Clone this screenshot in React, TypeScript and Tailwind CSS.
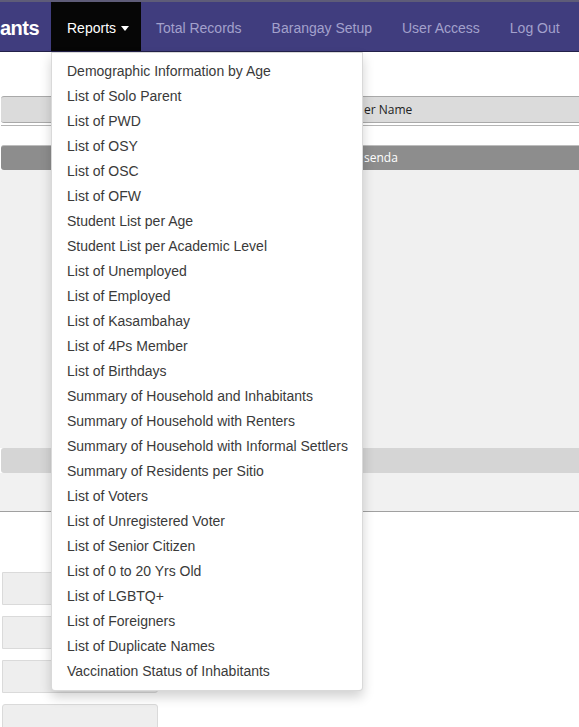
import React from "react";

const reportItems = [
  "Demographic Information by Age",
  "List of Solo Parent",
  "List of PWD",
  "List of OSY",
  "List of OSC",
  "List of OFW",
  "Student List per Age",
  "Student List per Academic Level",
  "List of Unemployed",
  "List of Employed",
  "List of Kasambahay",
  "List of 4Ps Member",
  "List of Birthdays",
  "Summary of Household and Inhabitants",
  "Summary of Household with Renters",
  "Summary of Household with Informal Settlers",
  "Summary of Residents per Sitio",
  "List of Voters",
  "List of Unregistered Voter",
  "List of Senior Citizen",
  "List of 0 to 20 Yrs Old",
  "List of LGBTQ+",
  "List of Foreigners",
  "List of Duplicate Names",
  "Vaccination Status of Inhabitants",
];

const navLinks = ["Total Records", "Barangay Setup", "User Access", "Log Out"];

function Navbar() {
  return (
    <nav className="flex h-[52px] items-stretch border-t-2 border-b border-t-[#5e5c78] border-b-[#23214a] bg-[#403d7e] text-[14px]">
      <div className="flex w-[51px] items-center pt-[3px] text-[20px] font-semibold tracking-[-0.5px] text-white">
        ants
      </div>
      <div className="flex w-[90px] items-center bg-[#060606] pl-4 pt-[3px] text-white">
        Reports
        <span className="ml-[5px] mt-[1px] h-0 w-0 border-x-[4px] border-t-[5px] border-x-transparent border-t-white" />
      </div>
      {navLinks.map((l) => (
        <div key={l} className="flex items-center px-[15px] pt-[3px] text-[#a3a1cc]">
          {l}
        </div>
      ))}
    </nav>
  );
}

function ReportsMenu() {
  return (
    <div className="absolute left-[51px] top-[52px] w-[312px] rounded-b-[4px] border border-[rgba(0,0,0,0.15)] bg-white py-[6px] shadow-[0_6px_12px_rgba(0,0,0,0.18)]">
      {reportItems.map((item) => (
        <div key={item} className="flex h-[25px] items-center whitespace-nowrap px-[15px] text-[14px] text-[#3a3a3a]">
          {item}
        </div>
      ))}
    </div>
  );
}

function PageBehind() {
  return (
    <div className="flex flex-col font-['Open_Sans',sans-serif] text-[12px]">
      <div className="h-[44px]" />
      <div className="ml-[1px] rounded-l-[3px] border-y border-[#a9a9a9] bg-[#dbdbdb]">
        <div className="flex h-[25px] items-center pl-[363px] font-medium text-[#222]">er Name</div>
      </div>
      <div className="ml-[1px] mt-[2px] border-t border-[#b5b5b5]" />
      <div className="h-[19px]" />
      <div className="ml-[1px] rounded-l-[3px] border-t border-[#bdbdbd] bg-[#8d8d8d]">
        <div className="flex h-[24px] items-center pl-[363px] text-white">senda</div>
      </div>
      <div className="h-[278px] bg-[#f0f0f0]" />
      <div className="ml-[1px] h-[25px] rounded-l-[3px] bg-[#d5d5d5]" />
      <div className="h-[39px] border-b border-[#a0a0a0] bg-[#f1f1f1]" />
      <div className="h-[60px]" />
      <div className="flex flex-col gap-[11px]">
        <div className="ml-[2px] h-[33px] w-[156px] rounded-r-[3px] border border-[#dadada] bg-[#eeeeee]" />
        <div className="ml-[2px] h-[33px] w-[156px] rounded-r-[3px] border border-[#dadada] bg-[#eeeeee]" />
        <div className="ml-[2px] h-[33px] w-[156px] rounded-r-[3px] border border-[#dadada] bg-[#eeeeee]" />
        <div className="ml-[2px] h-[33px] w-[156px] rounded-[3px] border border-[#dadada] bg-[#eeeeee]" />
      </div>
    </div>
  );
}

export default function App() {
  return (
    <div className="relative h-[727px] w-[579px] overflow-hidden bg-white font-['Liberation_Sans',Arial,sans-serif]">
      <Navbar />
      <PageBehind />
      <ReportsMenu />
    </div>
  );
}
